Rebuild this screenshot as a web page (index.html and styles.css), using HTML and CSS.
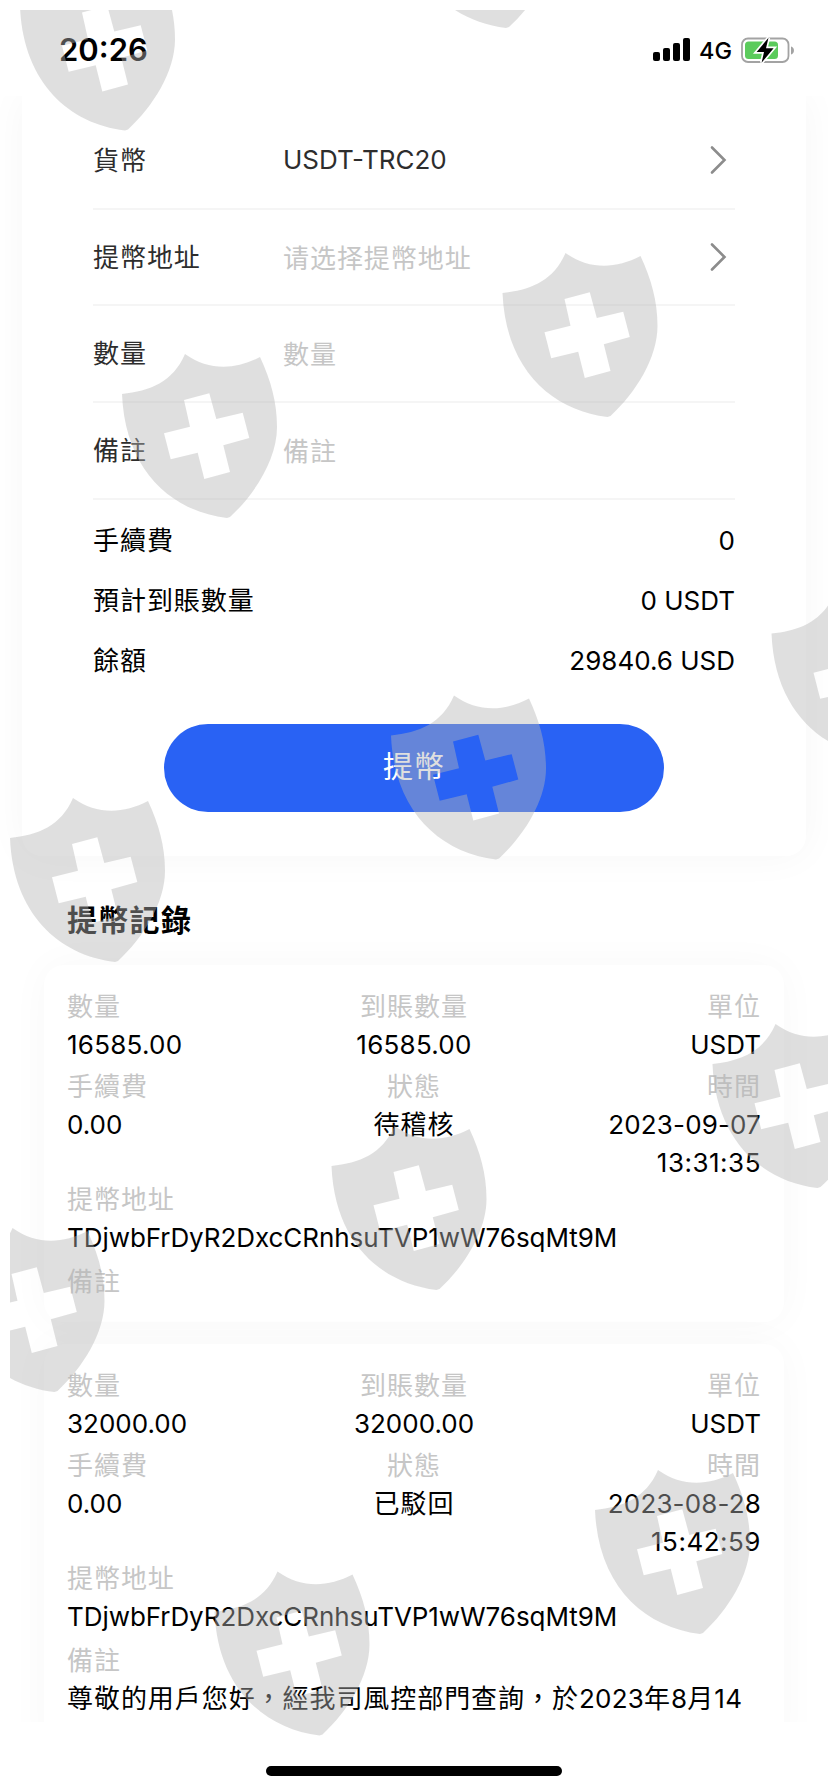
FILE: index.html
```html
<!DOCTYPE html>
<html lang="zh-Hant">
<head>
<meta charset="utf-8">
<title>提幣</title>
<link rel="stylesheet" href="styles.css">
</head>
<body>
<div class="screen">
  <header class="status">
    <span class="time">20:26</span>
    <div class="status-right">
      <svg class="signal" width="37" height="23" viewBox="0 0 37 23"><rect y="14" width="7" height="9" rx="2"/><rect x="10" y="10" width="7" height="13" rx="2"/><rect x="20" y="5" width="7" height="18" rx="2"/><rect x="30" width="7" height="23" rx="2"/></svg>
      <span class="network">4G</span>
      <svg class="battery" width="53" height="27" viewBox="0 0 53 27"><rect x="1" y="1.5" width="46.5" height="23.5" rx="6" fill="none" stroke="#a3a3a3" stroke-width="1.8"/><rect x="4" y="4.5" width="33" height="17.5" rx="3.5" fill="#5bcb5c"/><path d="M50 9.5a4.2 4.2 0 0 1 0 8z" fill="#a3a3a3"/><path d="M27.500 .8L15.600 15H23L20.600 25.700L32.600 11.200H25z" fill="#000" stroke="#fff" stroke-width="3.400" paint-order="stroke"/></svg>
    </div>
  </header>
  <main class="content">
    <section class="form-card">
      <div class="field"><span class="label">貨幣</span><span class="value latin">USDT-TRC20</span><svg class="chevron" width="18" height="30" viewBox="0 0 18 30"><path d="M3 2.500L15.500 15L3 27.500"/></svg></div>
      <div class="field"><span class="label">提幣地址</span><span class="value hint" lang="zh-Hans">请选择提幣地址</span><svg class="chevron" width="18" height="30" viewBox="0 0 18 30"><path d="M3 2.500L15.500 15L3 27.500"/></svg></div>
      <div class="field"><span class="label">數量</span><span class="value hint">數量</span></div>
      <div class="field"><span class="label">備註</span><span class="value hint">備註</span></div>
      <div class="totals">
        <div class="total"><span>手續費</span><span class="latin">0</span></div>
        <div class="total"><span>預計到賬數量</span><span class="latin">0 USDT</span></div>
        <div class="total"><span>餘額</span><span class="latin">29840.6 USD</span></div>
      </div>
      <button class="submit">提幣</button>
    </section>
    <h2 class="title">提幣記錄</h2>
    <article class="record">
      <div class="row">
        <div class="cell"><span class="key">數量</span><span class="latin amount">16585.00</span></div>
        <div class="cell mid"><span class="key">到賬數量</span><span class="latin amount">16585.00</span></div>
        <div class="cell end"><span class="key">單位</span><span class="latin">USDT</span></div>
      </div>
      <div class="row second">
        <div class="cell"><span class="key">手續費</span><span class="latin">0.00</span></div>
        <div class="cell mid"><span class="key">狀態</span><span class="state">待稽核</span></div>
        <div class="cell end"><span class="key">時間</span><span class="latin date">2023-09-07</span><span class="latin clock">13:31:35</span></div>
      </div>
      <div class="cell"><span class="key">提幣地址</span><span class="latin address">TDjwbFrDyR2DxcCRnhsuTVP1wW76sqMt9M</span></div>
      <div class="cell note"><span class="key">備註</span></div>
    </article>
    <article class="record">
      <div class="row">
        <div class="cell"><span class="key">數量</span><span class="latin">32000.00</span></div>
        <div class="cell mid"><span class="key">到賬數量</span><span class="latin">32000.00</span></div>
        <div class="cell end"><span class="key">單位</span><span class="latin">USDT</span></div>
      </div>
      <div class="row second">
        <div class="cell"><span class="key">手續費</span><span class="latin">0.00</span></div>
        <div class="cell mid"><span class="key">狀態</span><span class="state">已駁回</span></div>
        <div class="cell end"><span class="key">時間</span><span class="latin date">2023-08-28</span><span class="latin clock">15:42:59</span></div>
      </div>
      <div class="cell"><span class="key">提幣地址</span><span class="latin address">TDjwbFrDyR2DxcCRnhsuTVP1wW76sqMt9M</span></div>
      <div class="cell note"><span class="key">備註</span><span class="remark">尊敬的用戶您好，經我司風控部門查詢，於<span class="latin amount">2023</span>年<span class="latin amount">8</span>月<span class="latin amount">14</span></span></div>
    </article>
  </main>
  <footer class="home"><div class="home-bar"></div></footer>
  <svg class="watermark" width="818" height="1782" viewBox="10 10 818 1782" aria-hidden="true">
    <defs><path id="shield" fill-rule="evenodd" d="M0 40C28 37 51 28 63 0C87 17 113 16 138 3C149 27 155 48 155 73C155 105 133 140 108 163L105 164C48 157 3 115 0 40ZM62 46L87.300 39.300L94.300 65L120.700 58.700L127.300 84L101.300 91.300L108 118L82.300 125L75.700 98.700L48.700 105.300L42 79.300L68 72.700Z"/></defs>
    <use href="#shield" x="20" y="-33.500"/>
    <use href="#shield" x="401" y="-136"/>
    <use href="#shield" x="502.500" y="253"/>
    <use href="#shield" x="122" y="354"/>
    <use href="#shield" x="771.500" y="593.500"/>
    <use href="#shield" x="391" y="695.500"/>
    <use href="#shield" x="10" y="798"/>
    <use href="#shield" x="712.500" y="1024"/>
    <use href="#shield" x="331.500" y="1126"/>
    <use href="#shield" x="-50.500" y="1228"/>
    <use href="#shield" x="595" y="1470"/>
    <use href="#shield" x="214.500" y="1571.500"/>
  </svg>
</div>
</body>
</html>
```
FILE: styles.css
```css
* { box-sizing: border-box; }
body { margin: 0; background: #fff; }
.screen {
  position: relative;
  display: flex;
  flex-direction: column;
  width: 828px;
  height: 1792px;
  overflow: hidden;
  font: 26px/38px "Noto Sans CJK TC", sans-serif;
  letter-spacing: .94px;
  color: #000;
}
.latin { font-family: Inter, "Noto Sans CJK TC", sans-serif; letter-spacing: 0; }
.amount { letter-spacing: .25px; }

.status {
  flex: none;
  display: flex;
  justify-content: space-between;
  height: 96px;
  padding: 37px 34px 0 59px;
  font-family: Inter, sans-serif;
}
.time { font-size: 31px; font-weight: 600; line-height: 26px; letter-spacing: 0; }
.status-right { display: flex; align-items: flex-start; }
.signal { margin-top: 1px; }
.network { width: 42px; margin-left: 9px; font-size: 23.5px; font-weight: 450; line-height: 28px; letter-spacing: 0; }

.content { flex: none; height: 1626px; overflow: hidden; }
.form-card {
  height: 760px;
  margin: 0 22px;
  padding: 17px 71px 0;
  border-radius: 0 0 20px 20px;
  background: #fff;
  box-shadow: 0 0 40px rgba(0, 0, 0, .04);
}
.field {
  display: flex;
  align-items: center;
  height: 96.7px;
  border-bottom: 2px solid #f5f5f5;
  color: #2d2d2d;
}
.label { width: 190px; padding-bottom: 3px; }
.value { flex: 1; }
.hint { padding-bottom: 1px; color: #c6c6c6; }
.hint:lang(zh-Hans) { font-family: "Noto Sans CJK SC", sans-serif; }
.chevron { margin-right: 8px; fill: none; stroke: #8c8c8c; stroke-width: 2.6; stroke-linecap: round; }
.totals { padding-top: 10px; }
.total { display: flex; justify-content: space-between; height: 60px; line-height: 60px; }
.total > :first-child { line-height: 58px; }
.total .latin { line-height: 61px; }
.submit {
  display: block;
  width: 500px;
  height: 88px;
  margin: 34px auto 0;
  padding: 0 0 8px;
  border: 0;
  border-radius: 44px;
  background: #2962f4;
  color: #fff;
  font: 30px/80px "Noto Sans CJK TC", sans-serif;
  letter-spacing: 1px;
}
.title { margin: 40px 67px 0; font-size: 30px; font-weight: 700; line-height: 44px; letter-spacing: 1.3px; }

.record {
  height: 357px;
  margin: 25px 44px 0;
  padding: 23px 23px 0;
  border-radius: 20px;
  background: #fff;
  box-shadow: 0 0 40px rgba(0, 0, 0, .03);
}
.record + .record { height: 420px; margin-top: 22px; }
.row { display: grid; grid-template-columns: repeat(3, 1fr); height: 80px; }
.second { height: 113px; }
.cell { display: flex; flex-direction: column; }
.cell.mid { align-items: center; }
.cell.end { align-items: flex-end; text-align: right; }
.key, .state, .remark { line-height: 34px; }
.key { margin-bottom: 4px; color: #c6c6c6; }
.date { letter-spacing: .15px; }
.clock { letter-spacing: .5px; }
.address { letter-spacing: -.06px; }
.note { padding-top: 6px; }
.remark { white-space: nowrap; }

.home { display: flex; justify-content: center; padding-top: 44px; }
.home-bar { width: 296px; height: 10px; border-radius: 5px; background: #000; }

/* Repeating shield mark laid over the whole screen */
.watermark { position: absolute; left: 10px; top: 10px; fill: rgb(180, 180, 180); fill-opacity: .43; pointer-events: none; }
```
